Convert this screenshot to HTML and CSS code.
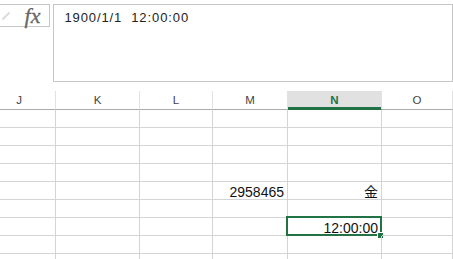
FILE: index.html
```html
<!DOCTYPE html>
<html lang="ja">
<head>
    <meta charset="UTF-8">
    <meta name="viewport" content="width=device-width, initial-scale=1.0">
    <title>Sheet</title>
    <link rel="stylesheet" href="styles.css">
</head>
<body>
    <div class="formula-bar">
        <div class="fx-box">
            <span class="check"></span>
            <span class="fx">fx</span>
        </div>
        <div class="formula-input">1900/1/1  12:00:00</div>
    </div>

    <div class="sheet">
        <div class="col-head">J</div>
        <div class="col-head">K</div>
        <div class="col-head">L</div>
        <div class="col-head">M</div>
        <div class="col-head selected">N</div>
        <div class="col-head">O</div>

        <div class="cell"></div><div class="cell"></div><div class="cell"></div><div class="cell"></div><div class="cell"></div><div class="cell"></div>
        <div class="cell"></div><div class="cell"></div><div class="cell"></div><div class="cell"></div><div class="cell"></div><div class="cell"></div>
        <div class="cell"></div><div class="cell"></div><div class="cell"></div><div class="cell"></div><div class="cell"></div><div class="cell"></div>
        <div class="cell"></div><div class="cell"></div><div class="cell"></div><div class="cell"></div><div class="cell"></div><div class="cell"></div>

        <div class="cell"></div><div class="cell"></div><div class="cell"></div>
        <div class="cell num">2958465</div>
        <div class="cell num">金</div>
        <div class="cell"></div>

        <div class="cell"></div><div class="cell"></div><div class="cell"></div><div class="cell"></div><div class="cell"></div><div class="cell"></div>

        <div class="cell"></div><div class="cell"></div><div class="cell"></div><div class="cell"></div>
        <div class="cell num active">12:00:00<div class="selection"><span class="fill-handle"></span></div></div>
        <div class="cell"></div>

        <div class="cell"></div><div class="cell"></div><div class="cell"></div><div class="cell"></div><div class="cell"></div><div class="cell"></div>
        <div class="cell"></div><div class="cell"></div><div class="cell"></div><div class="cell"></div><div class="cell"></div><div class="cell"></div>
    </div>
</body>
</html>
```

FILE: styles.css
```css
body {
    font-family: "Liberation Sans", Arial, "Noto Sans CJK JP", sans-serif;
    margin: 0;
    padding: 0;
    width: 453px;
    height: 259px;
    overflow: hidden;
    background-color: #fff;
}

.formula-bar {
    display: flex;
    align-items: flex-start;
    height: 91px;
    padding-top: 4px;
    box-sizing: border-box;
}

.fx-box {
    position: relative;
    margin-left: -10px;
    width: 63px;
    height: 23px;
    border: 1px solid #c6c6c6;
    box-sizing: border-box;
    display: flex;
    align-items: center;
    justify-content: flex-end;
    padding-right: 9px;
}

.check {
    position: absolute;
    left: 14px;
    top: 6px;
    width: 2px;
    height: 10px;
    background-color: #dcdcdc;
    transform: rotate(45deg);
}

.fx {
    font-family: "Liberation Serif", "Times New Roman", serif;
    font-style: italic;
    font-size: 22px;
    line-height: 21px;
    color: #666;
    -webkit-text-stroke: 0.3px #666;
}

.formula-input {
    margin-left: 3px;
    width: 420px;
    height: 78px;
    border: 1px solid #c6c6c6;
    box-sizing: border-box;
    padding: 5px 0 0 10px;
    font-size: 13px;
    line-height: 16px;
    letter-spacing: 0.9px;
    color: #222;
    white-space: pre;
}

.sheet {
    display: grid;
    grid-template-columns: 73px 84px 73px 75px 94px 1fr;
    margin-left: -17px;
    width: 470px;
}

.col-head {
    height: 19px;
    border-right: 1px solid #e2e2e2;
    border-bottom: 1px solid #ababab;
    box-sizing: border-box;
    text-align: center;
    font-size: 11.5px;
    line-height: 18px;
    color: #444;
}

.col-head.selected {
    background-color: #e1e1e1;
    color: #217346;
    font-weight: bold;
    border-bottom-color: #217346;
    box-shadow: inset 0 -2px 0 #217346;
}

.cell {
    position: relative;
    height: 18px;
    border-right: 1px solid #d4d4d4;
    border-bottom: 1px solid #d4d4d4;
    box-sizing: border-box;
    font-size: 14px;
    line-height: 20px;
    color: #111;
}

.cell.num {
    text-align: right;
    padding-right: 3px;
}

.selection {
    position: absolute;
    left: -2px;
    top: -2px;
    right: -1px;
    bottom: -1px;
    border: 2px solid #217346;
}

.fill-handle {
    position: absolute;
    right: -4px;
    bottom: -5px;
    width: 5px;
    height: 5px;
    background-color: #217346;
    border: 1px solid #fff;
}
```
